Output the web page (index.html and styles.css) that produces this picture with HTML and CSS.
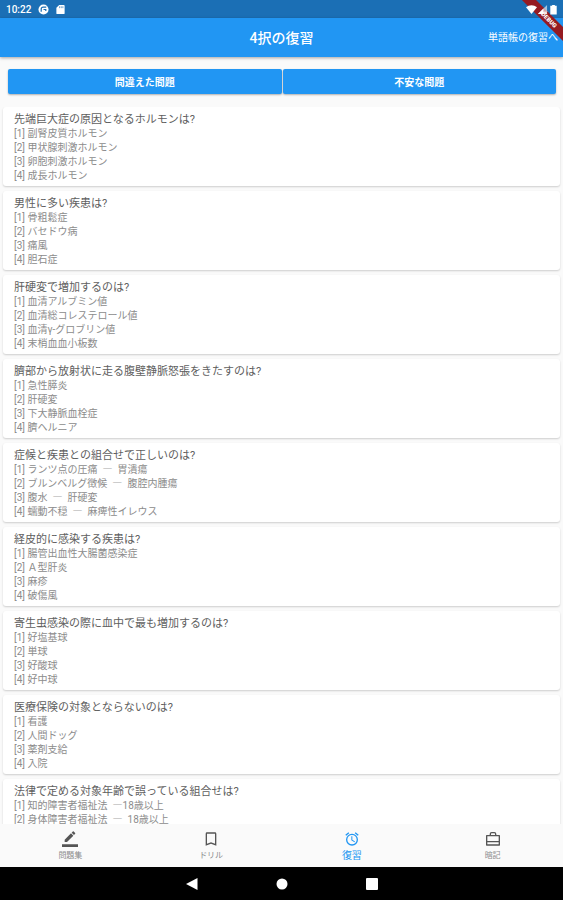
FILE: index.html
```html
<!DOCTYPE html>
<html lang="ja">
<head>
    <meta charset="UTF-8">
    <meta name="viewport" content="width=device-width, initial-scale=1.0">
    <title>4択の復習</title>
    <link rel="stylesheet" href="styles.css">
</head>
<body>

    <div class="status-bar">
        <span class="clock">10:22</span>
        <svg class="status-icon" viewBox="0 0 12 12"><circle cx="6" cy="6" r="5.5" fill="#fff"/><path d="M3.5 8.5V5.5a2 2 0 0 1 2-2H9M6 6h2.5v1.5" fill="none" stroke="#1b6fb5" stroke-width="1.3"/></svg>
        <svg class="status-icon" viewBox="0 0 12 12"><path d="M4.6 1H9.5a1 1 0 0 1 1 1v8a1 1 0 0 1-1 1h-7a1 1 0 0 1-1-1V4z" fill="#fff"/><path d="M5 2.5v2M6.8 2.5v2M8.6 2.5v2" stroke="#1b6fb5" stroke-width=".7"/></svg>
        <div class="status-right">
            <svg class="status-icon" viewBox="0 0 12 12"><path d="M0 3.6C3.4.5 8.6.5 12 3.6L6 11z" fill="#fff"/></svg>
            <svg class="status-icon" viewBox="0 0 12 12"><path d="M11 1v10H1z" fill="#fff" opacity=".6"/><path d="M7 5v6H1z" fill="#fff"/><path d="M8.500 8l2.500 3M11 8l-2.500 3" stroke="#fff" stroke-width=".8"/></svg>
            <svg class="status-icon" viewBox="0 0 12 12"><path d="M4.500 1h3v1H9.500v9.500h-7V2h2z" fill="#fff"/></svg>
        </div>
    </div>

    <header class="app-bar">
        <h1 class="app-title">4択の復習</h1>
        <a href="#" class="app-link">単語帳の復習へ</a>
    </header>

    <div class="debug-corner"><span class="debug-banner">DEBUG</span></div>

    <div class="tab-buttons">
        <button type="button">間違えた問題</button>
        <button type="button">不安な問題</button>
    </div>

    <main class="question-list">
        <article class="card">
            <h2>先端巨大症の原因となるホルモンは?</h2>
            <p>[1] 副腎皮質ホルモン</p>
            <p>[2] 甲状腺刺激ホルモン</p>
            <p>[3] 卵胞刺激ホルモン</p>
            <p>[4] 成長ホルモン</p>
        </article>
        <article class="card">
            <h2>男性に多い疾患は?</h2>
            <p>[1] 骨粗鬆症</p>
            <p>[2] バセドウ病</p>
            <p>[3] 痛風</p>
            <p>[4] 胆石症</p>
        </article>
        <article class="card">
            <h2>肝硬変で増加するのは?</h2>
            <p>[1] 血清アルブミン値</p>
            <p>[2] 血清総コレステロール値</p>
            <p>[3] 血清γ-グロブリン値</p>
            <p>[4] 末梢血血小板数</p>
        </article>
        <article class="card">
            <h2>臍部から放射状に走る腹壁静脈怒張をきたすのは?</h2>
            <p>[1] 急性膵炎</p>
            <p>[2] 肝硬変</p>
            <p>[3] 下大静脈血栓症</p>
            <p>[4] 臍ヘルニア</p>
        </article>
        <article class="card">
            <h2>症候と疾患との組合せで正しいのは?</h2>
            <p>[1] ランツ点の圧痛&ensp;<span class="dash">―</span>&ensp;胃潰瘍</p>
            <p>[2] ブルンベルグ徴候&ensp;<span class="dash">―</span>&ensp;腹腔内腫瘍</p>
            <p>[3] 腹水&ensp;<span class="dash">―</span>&ensp;肝硬変</p>
            <p>[4] 蠕動不穏&ensp;<span class="dash">―</span>&ensp;麻痺性イレウス</p>
        </article>
        <article class="card">
            <h2>経皮的に感染する疾患は?</h2>
            <p>[1] 腸管出血性大腸菌感染症</p>
            <p>[2] Ａ型肝炎</p>
            <p>[3] 麻疹</p>
            <p>[4] 破傷風</p>
        </article>
        <article class="card">
            <h2>寄生虫感染の際に血中で最も増加するのは?</h2>
            <p>[1] 好塩基球</p>
            <p>[2] 単球</p>
            <p>[3] 好酸球</p>
            <p>[4] 好中球</p>
        </article>
        <article class="card">
            <h2>医療保険の対象とならないのは?</h2>
            <p>[1] 看護</p>
            <p>[2] 人間ドッグ</p>
            <p>[3] 薬剤支給</p>
            <p>[4] 入院</p>
        </article>
        <article class="card">
            <h2>法律で定める対象年齢で誤っている組合せは?</h2>
            <p>[1] 知的障害者福祉法&ensp;<span class="dash">―</span>18歳以上</p>
            <p>[2] 身体障害者福祉法&ensp;<span class="dash">―</span>&ensp;18歳以上</p>
        </article>
    </main>

    <nav class="bottom-nav">
        <a href="#" class="nav-item">
            <svg viewBox="0 0 24 24"><path d="M17 7L7.500 16.500H4v-3.500L13.500 3.500zM18 6l1.700-1.700a1 1 0 0 0 0-1.400L17.600.800a1 1 0 0 0-1.400 0L14.500 2.500zM0 20h24v4H0z" fill="currentColor"/></svg>
            <span>問題集</span>
        </a>
        <a href="#" class="nav-item">
            <svg viewBox="0 0 24 24"><path d="M18 2H6a2 2 0 0 0-2 2v18l8-3 8 3V4a2 2 0 0 0-2-2zm0 17l-6-2.200L6 19V4h12z" fill="currentColor"/></svg>
            <span>ドリル</span>
        </a>
        <a href="#" class="nav-item active">
            <svg viewBox="0 0 24 24"><path d="M22 5.700l-4.600-3.900-1.300 1.500 4.600 3.900zM7.900 3.400L6.600 1.900 2 5.700l1.300 1.500zM12.500 8H11v6l4.700 2.900.8-1.200-4-2.400zM12 4a9 9 0 1 0 0 18 9 9 0 0 0 0-18zm0 16a7 7 0 1 1 0-14 7 7 0 0 1 0 14z" fill="currentColor"/></svg>
            <span>復習</span>
        </a>
        <a href="#" class="nav-item">
            <svg viewBox="0 0 24 24"><path d="M8 7V4.500A2 2 0 0 1 10 2.500h4A2 2 0 0 1 16 4.500V7M2.500 7h19v14h-19zM2.500 16h19" fill="none" stroke="currentColor" stroke-width="2" stroke-linejoin="round"/></svg>
            <span>暗記</span>
        </a>
    </nav>

    <div class="system-nav">
        <button type="button" aria-label="戻る"><svg viewBox="0 0 12 12"><path d="M11.500 0v12L0 6z" fill="#fff"/></svg></button>
        <button type="button" aria-label="ホーム"><svg viewBox="0 0 12 12"><circle cx="6" cy="6" r="5.500" fill="#fff"/></svg></button>
        <button type="button" aria-label="アプリ履歴"><svg viewBox="0 0 12 12"><rect width="12" height="12" rx="1" fill="#fff"/></svg></button>
    </div>

</body>
</html>
```
FILE: styles.css
```css
:root {
    --primary: #2196f3;
    --primary-dark: #1b6fb5;
    --page-bg: #fafafa;
    --title-color: #606060;
    --text-color: #8c8c8c;
}

* {
    margin: 0;
    padding: 0;
    box-sizing: border-box;
}

body {
    height: 100vh;
    display: flex;
    flex-direction: column;
    overflow: hidden;
    position: relative;
    font-family: Roboto, "Noto Sans CJK JP", sans-serif;
    font-size: 10px;
    background-color: var(--page-bg);
    color: var(--text-color);
}

a {
    color: inherit;
    text-decoration: none;
}

button {
    border: none;
    font: inherit;
    cursor: pointer;
}

svg {
    display: block;
}

.status-bar {
    display: flex;
    flex-shrink: 0;
    align-items: center;
    gap: 6px;
    height: 18px;
    padding: 0 4px 0 6px;
    background-color: var(--primary-dark);
    color: #fff;
}

.clock {
    font-weight: 500;
    margin-right: 1px;
}

.status-icon {
    width: 11px;
    height: 11px;
}

/* Status icons stay above the debug ribbon */
.status-right {
    display: flex;
    margin-left: auto;
    position: relative;
    z-index: 2;
}

.app-bar {
    display: grid;
    flex-shrink: 0;
    grid-template-columns: 1fr auto 1fr;
    align-items: center;
    height: 39px;
    padding: 0 5px;
    background-color: var(--primary);
    color: #fff;
    box-shadow: 0 1px 3px rgba(0, 0, 0, 0.35);
}

.app-title {
    grid-column: 2;
    font-size: 14px;
    font-weight: 500;
    line-height: 20px;
}

.app-link {
    justify-self: end;
    line-height: 16px;
}

/* Debug ribbon over the top right corner */
.debug-corner {
    position: absolute;
    top: 0;
    right: 0;
    width: 48px;
    height: 48px;
    overflow: hidden;
    pointer-events: none;
}

.debug-banner {
    position: absolute;
    top: 15px;
    right: -26px;
    width: 80px;
    background-color: #951b22;
    color: #fff;
    font-size: 6px;
    font-weight: 900;
    line-height: 10px;
    text-align: center;
    transform: rotate(45deg);
}

.tab-buttons {
    display: flex;
    flex-shrink: 0;
    gap: 1px;
    padding: 12px 7px 13px 8px;
}

.tab-buttons button {
    flex: 1;
    height: 25px;
    border-radius: 2px;
    background-color: var(--primary);
    color: #fff;
    font-weight: 700;
    box-shadow: 0 1px 2px rgba(0, 0, 0, 0.3);
}

.question-list {
    flex: 1;
    min-height: 0;
    overflow: hidden;
    padding: 0 3px;
}

.card {
    min-height: 79px;
    margin-bottom: 5px;
    padding: 6px 11px 2px;
    background-color: #fff;
    border-radius: 3px;
    box-shadow: 0 1px 2px rgba(0, 0, 0, 0.18);
}

.card h2 {
    color: var(--title-color);
    font-size: 11px;
    font-weight: 400;
    line-height: 14px;
}

.card p {
    line-height: 14px;
}

.dash {
    font-family: "Noto Sans CJK JP", sans-serif;
    line-height: 1;
    color: #aaa;
}

.bottom-nav {
    display: flex;
    flex-shrink: 0;
    height: 43px;
    background-color: var(--page-bg);
}

.nav-item {
    flex: 1;
    display: flex;
    flex-direction: column;
    align-items: center;
    gap: 2px;
    padding-top: 7px;
    font-size: 8px;
    line-height: 14px;
}

.nav-item svg {
    width: 16px;
    height: 16px;
    color: #555;
}

.nav-item.active,
.nav-item.active svg {
    color: var(--primary);
}

.nav-item.active {
    font-size: 10px;
}

.system-nav {
    display: flex;
    flex-shrink: 0;
    justify-content: center;
    align-items: center;
    gap: 78px;
    height: 33px;
    background-color: #000;
}

.system-nav button {
    background: none;
}

.system-nav svg {
    width: 12px;
    height: 12px;
}
```
